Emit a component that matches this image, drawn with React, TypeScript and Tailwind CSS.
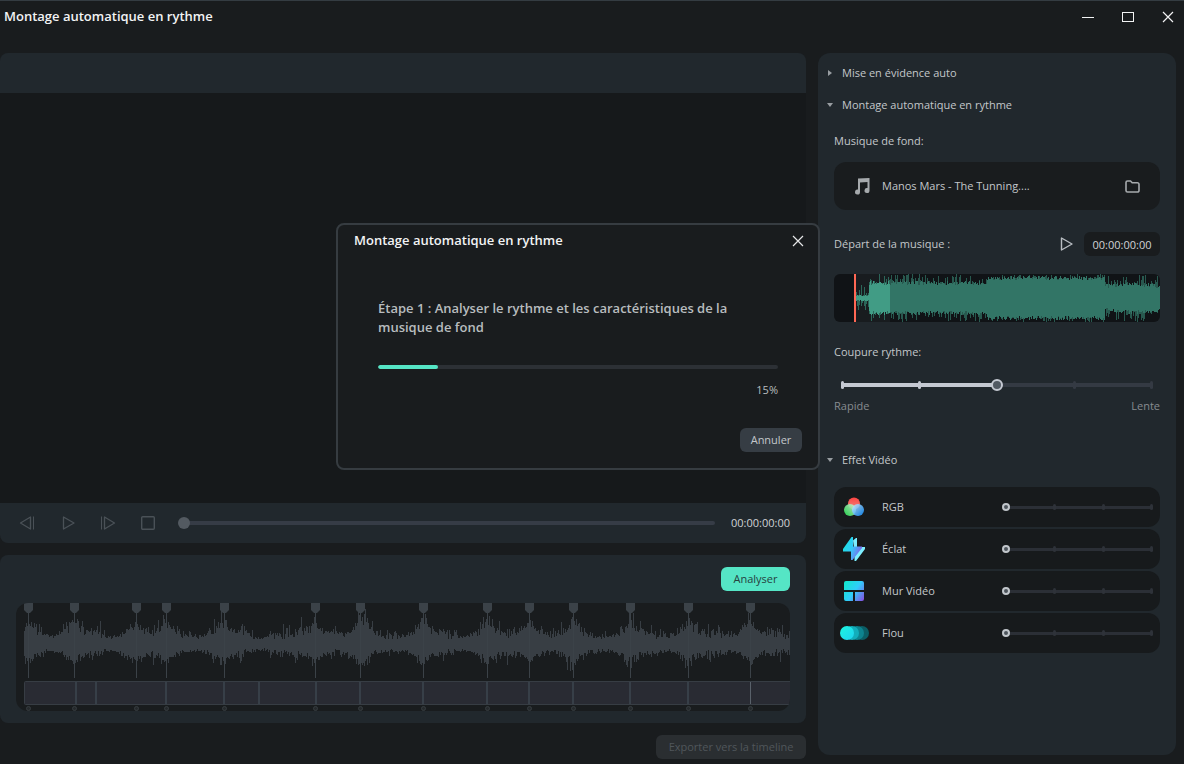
import { useState } from "react";

const MARKERS = [28, 74, 136, 166, 224, 315, 360, 423, 487, 529, 573, 630, 688, 750];
const CUTS = [76, 96, 166, 224, 259, 316, 360, 423, 487, 529, 573, 630, 688];

// small deterministic noise so the waveforms never change between renders
function noise(n: number) {
  const v = Math.sin(n * 127.1 + 311.7) * 43758.5453;
  return v - Math.floor(v);
}

function wavePath(from: number, to: number, mid: number, amp: (x: number) => [number, number]) {
  let d = "";
  for (let x = from; x < to; x++) {
    const [up, down] = amp(x);
    d += `M${x} ${mid - up}h1V${mid + down}h-1z`;
  }
  return d;
}

function beatAmp(x: number): [number, number] {
  const near = Math.min(...MARKERS.map((m) => Math.abs(m - x)));
  const swell = Math.exp(-near / 9);
  const drift = 1 + 0.35 * Math.sin(x / 11) + 0.25 * Math.sin(x / 4.7);
  return [
    Math.round(4 + swell * 11 + drift * (noise(x) * 6 + noise(x + 31) ** 4 * 9) + swell * noise(x + 5) * 8),
    Math.round(4 + swell * 8 + drift * (noise(x + 77) * 5 + noise(x + 431) ** 4 * 6) + swell * noise(x + 6) * 7),
  ];
}

function musicLevel(x: number) {
  if (x < 35) return 2;
  if (x < 153) return 13;
  if (x < 271) return 18;
  return 11 + Math.sin(x / 9);
}

function musicCore(x: number): [number, number] {
  const l = musicLevel(x);
  const k = l < 5 ? 1 : 4;
  return [Math.round(l + noise(x) * k), Math.round(l + noise(x + 50) * k)];
}

function musicFringe(x: number): [number, number] {
  const l = musicLevel(x);
  const k = l < 5 ? 11 : l < 17 ? 12 : 6;
  return [
    Math.min(24, Math.round(l + noise(x + 9) ** 2 * k)),
    Math.min(24, Math.round(l + noise(x + 63) ** 2 * k)),
  ];
}

function MusicWave() {
  return (
    <svg
      viewBox="0 0 326 48"
      preserveAspectRatio="none"
      shapeRendering="crispEdges"
      className="h-12 w-full rounded-md bg-[#101316]"
    >
      <rect x="20" width="36" height="48" fill="#181c1f" />
      <path d={wavePath(22, 56, 24, musicFringe)} fill="#2b6659" />
      <path d={wavePath(22, 56, 24, musicCore)} fill="#419c85" />
      <path d={wavePath(56, 326, 24, musicFringe)} fill="#28594f" />
      <path d={wavePath(56, 326, 24, musicCore)} fill="#327566" />
      <rect x="20" width="2" height="48" fill="#ff6754" />
    </svg>
  );
}

function BeatTimeline() {
  return (
    <svg
      viewBox="16 0 774 108"
      preserveAspectRatio="none"
      className="h-[108px] w-full rounded-xl bg-[#191c1e]"
    >
      <path d={wavePath(24, 790, 41, beatAmp)} fill="#383e44" shapeRendering="crispEdges" />
      <rect x="24.5" y="78.5" width="780" height="23" rx="1" fill="#292b33" stroke="#373d44" />
      <g fill="#373f48" shapeRendering="crispEdges">
        {CUTS.map((x) => (
          <rect key={x} x={x - 1} y="79" width="2" height="22" />
        ))}
        <rect x="750" y="79" width="1" height="22" fill="#59616a" />
      </g>
      {MARKERS.map((x) => (
        <g key={x}>
          <path d={`M${x - 4} 0h9v7l-3 3h-3l-3-3z`} fill="#3b4248" />
          <path d={`M${x} 10h1v65h-1z`} fill="#3b4248" shapeRendering="crispEdges" />
          <circle cx={x + 0.5} cy="105.5" r="2" fill="#25292c" stroke="#373c40" />
        </g>
      ))}
    </svg>
  );
}

function RgbIcon() {
  return (
    <svg width="20" height="20" viewBox="0 0 20 20">
      <defs>
        <linearGradient id="rgb-r" x1="0" y1="0" x2="0" y2="1">
          <stop stopColor="#ff4340" />
          <stop offset="1" stopColor="#e98c88" />
        </linearGradient>
        <linearGradient id="rgb-g" x1="0" y1="1" x2="1" y2="0">
          <stop stopColor="#1fe04b" />
          <stop offset="1" stopColor="#d9efdc" />
        </linearGradient>
        <linearGradient id="rgb-b" x1="1" y1="1" x2="0" y2="0">
          <stop stopColor="#0a8bff" />
          <stop offset="1" stopColor="#c9ecff" />
        </linearGradient>
      </defs>
      <circle cx="10" cy="6.5" r="6" fill="url(#rgb-r)" />
      <circle cx="6" cy="13" r="6" fill="url(#rgb-g)" fillOpacity="0.92" />
      <circle cx="14" cy="13" r="6" fill="url(#rgb-b)" fillOpacity="0.88" />
    </svg>
  );
}

function FlashIcon() {
  return (
    <svg width="24" height="26" viewBox="0 0 24 26">
      <defs>
        <linearGradient id="flash" x1="0" y1="0.2" x2="1" y2="0.7">
          <stop stopColor="#14e6dc" />
          <stop offset="0.5" stopColor="#36c9fb" />
          <stop offset="1" stopColor="#8a55e8" />
        </linearGradient>
      </defs>
      <path d="M11 4.500 14 2h1v9h8v2L14 25h-1.500V15z" fill="#7deeff" />
      <path d="M9.500 1H11v9.500h9v1.500L10.500 24H9V15.500H1V13z" fill="url(#flash)" />
    </svg>
  );
}

function WallIcon() {
  return (
    <svg width="20" height="20" viewBox="0 0 20 20">
      <defs>
        <linearGradient id="wall" gradientUnits="userSpaceOnUse" x1="0" y1="4" x2="20" y2="18">
          <stop stopColor="#14e5d0" />
          <stop offset="0.5" stopColor="#30cdfb" />
          <stop offset="1" stopColor="#8355e4" />
        </linearGradient>
      </defs>
      <path
        d="M2 0h16a2 2 0 0 1 2 2v7H0V2a2 2 0 0 1 2-2zM0 11h9v9H2a2 2 0 0 1-2-2zM11 11h9v7a2 2 0 0 1-2 2h-7z"
        fill="url(#wall)"
      />
    </svg>
  );
}

function BlurIcon() {
  return (
    <svg width="29" height="14" viewBox="0 0 29 14">
      <defs>
        <linearGradient id="blur" x1="0" y1="0" x2="1" y2="1">
          <stop stopColor="#1cf5df" />
          <stop offset="1" stopColor="#1fd3f2" />
        </linearGradient>
      </defs>
      <circle cx="22" cy="7" r="7" fill="#0b5e66" />
      <circle cx="17" cy="7" r="7" fill="#0d838f" />
      <circle cx="12" cy="7" r="7" fill="#12aebb" />
      <circle cx="7" cy="7" r="7" fill="url(#blur)" />
    </svg>
  );
}

function CloseIcon() {
  return (
    <svg width="12" height="12" viewBox="0 0 12 12" fill="none" stroke="currentColor">
      <path d="M1 1l10 10M11 1L1 11" strokeWidth="1.2" />
    </svg>
  );
}

function SectionToggle({ label, open }: { label: string; open: boolean }) {
  return (
    <button type="button" aria-expanded={open} className="flex h-8 items-center gap-2 pl-2 text-left">
      <svg width="8" height="8" viewBox="0 0 8 8" fill="#989da1">
        {open ? <path d="M1 2h6L4 6z" /> : <path d="M2 1v6l4-3z" />}
      </svg>
      {label}
    </button>
  );
}

function CutSlider() {
  const [value, setValue] = useState(2);
  return (
    <div className="grid items-center px-[2px]">
      <div className="col-start-1 row-start-1 mx-[5px] h-1 bg-[#343a43]">
        <div className="h-full bg-[#c5c9d2]" style={{ width: `${value * 25}%` }} />
      </div>
      <div className="col-start-1 row-start-1 mx-[5px] flex justify-between">
        {[0, 1, 2, 3, 4].map((i) => (
          <span
            key={i}
            className={`h-2 w-[3px] rounded-full ${i <= value ? "bg-[#c5c9d2]" : "bg-[#343a43]"}`}
          />
        ))}
      </div>
      <input
        id="cut"
        type="range"
        min={0}
        max={4}
        value={value}
        onChange={(e) => setValue(Number(e.target.value))}
        className="col-start-1 row-start-1 h-4 w-full appearance-none bg-transparent [&::-webkit-slider-thumb]:size-3 [&::-webkit-slider-thumb]:appearance-none [&::-webkit-slider-thumb]:rounded-full [&::-webkit-slider-thumb]:border-2 [&::-webkit-slider-thumb]:border-[#c5c9d2] [&::-webkit-slider-thumb]:bg-[#525a63]"
      />
    </div>
  );
}

const EFFECTS = [
  { id: "rgb", label: "RGB", icon: <RgbIcon /> },
  { id: "flash", label: "Éclat", icon: <FlashIcon /> },
  { id: "wall", label: "Mur Vidéo", icon: <WallIcon /> },
  { id: "blur", label: "Flou", icon: <BlurIcon /> },
];

function EffectRow({ id, label, icon }: { id: string; label: string; icon: React.ReactNode }) {
  return (
    <div className="flex h-10 items-center rounded-xl bg-[#171a1c] pr-1">
      <span className="grid w-10 place-items-center">{icon}</span>
      <label htmlFor={id} className="flex-1 pl-2">
        {label}
      </label>
      <div className="grid w-[154px] items-center">
        <div className="col-start-1 row-start-1 mx-1 h-[3px] rounded-full bg-[#2b2f36]" />
        <div className="col-start-1 row-start-1 mx-[3px] flex justify-between">
          {[0, 1, 2, 3].map((i) => (
            <span key={i} className="h-[6px] w-[3px] rounded-full bg-[#2e3239]" />
          ))}
        </div>
        <input
          id={id}
          type="range"
          min={0}
          max={3}
          defaultValue={0}
          className="col-start-1 row-start-1 h-4 w-full appearance-none bg-transparent [&::-webkit-slider-thumb]:size-2 [&::-webkit-slider-thumb]:appearance-none [&::-webkit-slider-thumb]:rounded-full [&::-webkit-slider-thumb]:border-2 [&::-webkit-slider-thumb]:border-[#c1c6cb] [&::-webkit-slider-thumb]:bg-[#4d545b]"
        />
      </div>
    </div>
  );
}

function SidePanel() {
  return (
    <aside className="flex w-[358px] shrink-0 flex-col rounded-xl bg-[#21282d] pt-1 text-[#c3c7ca]">
      <SectionToggle label="Mise en évidence auto" open={false} />
      <SectionToggle label="Montage automatique en rythme" open />
      <div className="flex flex-col px-4">
        <h3 className="mt-3 leading-4">Musique de fond:</h3>
        <div className="mt-[13px] flex h-12 items-center rounded-xl bg-[#191c1e] px-5">
          <svg width="16" height="18" viewBox="0 0 16 18" fill="#a6aaad">
            <path d="M4 1.500 15.500 1V13.500a2.500 2.500 0 1 1-2-2.400V5L6 5.500v9.500a2.500 2.500 0 1 1-2-2.400z" />
          </svg>
          <span className="flex-1 pl-3">Manos Mars - The Tunning....</span>
          <button type="button" aria-label="Parcourir">
            <svg width="15" height="13" viewBox="0 0 15 13" fill="none" stroke="#a6aaad" strokeWidth="1.6">
              <path d="M1 2.500a1.500 1.500 0 0 1 1.500-1.500h3l1.700 1.800h5.300A1.500 1.500 0 0 1 14 4.300v6.200a1.500 1.500 0 0 1-1.500 1.500h-10A1.500 1.500 0 0 1 1 10.500z" />
            </svg>
          </button>
        </div>
        <div className="mt-[22px] flex h-6 items-center">
          <label htmlFor="start" className="flex-1">
            Départ de la musique :
          </label>
          <button type="button" aria-label="Écouter" className="mr-[11px]">
            <svg width="13" height="14" viewBox="0 0 13 14" fill="none" stroke="#b9bec3" strokeWidth="1.4">
              <path d="M1.500 1v12L12 7z" strokeLinejoin="round" />
            </svg>
          </button>
          <input
            id="start"
            defaultValue="00:00:00:00"
            className="h-6 w-[76px] rounded-md bg-[#191c1e] text-center text-[#d0d3d6]"
          />
        </div>
        <div className="mt-[18px]">
          <MusicWave />
        </div>
        <label htmlFor="cut" className="mt-[22px] leading-4">
          Coupure rythme:
        </label>
        <div className="mt-[17px]">
          <CutSlider />
        </div>
        <div className="mt-[5px] flex justify-between leading-4 text-[#878c90]">
          <span>Rapide</span>
          <span>Lente</span>
        </div>
      </div>
      <div className="mt-[30px] flex flex-col">
        <SectionToggle label="Effet Vidéo" open />
      </div>
      <div className="mt-[11px] flex flex-col gap-[2px] px-4">
        {EFFECTS.map((e) => (
          <EffectRow key={e.id} {...e} />
        ))}
      </div>
    </aside>
  );
}

function PlayerControls() {
  return (
    <div className="flex h-10 items-center bg-[#21282d] pr-4 pl-[19px]">
      <div className="flex items-center gap-[25px] text-[#4a5157]">
        <button type="button" aria-label="Image précédente">
          <svg width="16" height="14" viewBox="0 0 16 14" fill="none" stroke="currentColor" strokeWidth="1.3">
            <path d="M11.500 1v12L1.500 7z" strokeLinejoin="round" />
            <path d="M14.500 0.500v13" strokeWidth="1" />
          </svg>
        </button>
        <button type="button" aria-label="Lecture" className="pl-[2px]">
          <svg width="13" height="14" viewBox="0 0 13 14" fill="none" stroke="currentColor" strokeWidth="1.3">
            <path d="M1.500 1v12L12 7z" strokeLinejoin="round" />
          </svg>
        </button>
        <button type="button" aria-label="Image suivante">
          <svg width="16" height="14" viewBox="0 0 16 14" fill="none" stroke="currentColor" strokeWidth="1.3">
            <path d="M4.500 1v12L14.500 7z" strokeLinejoin="round" />
            <path d="M1.500 0.500v13" strokeWidth="1" />
          </svg>
        </button>
        <button type="button" aria-label="Arrêt">
          <svg width="14" height="14" viewBox="0 0 14 14" fill="none" stroke="currentColor" strokeWidth="1.4">
            <rect x="0.700" y="0.700" width="12.600" height="12.600" rx="1" />
          </svg>
        </button>
      </div>
      <div className="ml-[23px] grid flex-1 items-center">
        <div className="col-start-1 row-start-1 ml-1 h-1 rounded-full bg-[#363c46]" />
        <input
          type="range"
          aria-label="Position"
          defaultValue={0}
          className="col-start-1 row-start-1 h-4 w-full appearance-none bg-transparent [&::-webkit-slider-thumb]:size-3 [&::-webkit-slider-thumb]:appearance-none [&::-webkit-slider-thumb]:rounded-full [&::-webkit-slider-thumb]:bg-[#535a61]"
        />
      </div>
      <time className="ml-4 text-[#d0d3d6]">00:00:00:00</time>
    </div>
  );
}

function ProgressDialog({ percent }: { percent: number }) {
  return (
    <div className="fixed inset-0 flex items-center justify-center pr-7 pb-[71px]">
      <div
        role="dialog"
        aria-labelledby="dialog-title"
        className="flex w-[484px] flex-col rounded-lg border-2 border-[#363c41] bg-[#191c1e] px-4 pt-[6px] pb-4"
      >
        <div className="-mr-[2px] flex h-5 items-center justify-between">
          <h2 id="dialog-title" className="text-[13px] font-semibold text-[#f2f3f4]">
            Montage automatique en rythme
          </h2>
          <button type="button" aria-label="Fermer" className="text-[#e6e7e8]">
            <CloseIcon />
          </button>
        </div>
        <div className="mt-12 flex flex-col px-6">
          <p className="text-[13px] leading-[19px] font-semibold text-[#b8bcbf]">
            Étape 1 : Analyser le rythme et les caractéristiques de la musique de fond
          </p>
          <div
            role="progressbar"
            aria-label="Analyse"
            aria-valuenow={percent}
            className="mt-7 h-1 overflow-hidden rounded-full bg-[#2c3035]"
          >
            <div className="h-full rounded-full bg-[#55e5c5]" style={{ width: `${percent}%` }} />
          </div>
          <span className="mt-[13px] self-end leading-4 text-[#b8bcbf]">{percent}%</span>
        </div>
        <button
          type="button"
          className="mt-[30px] h-6 w-[62px] self-end rounded-md bg-[#363d44] text-[#c3c7ca]"
        >
          Annuler
        </button>
      </div>
    </div>
  );
}

export default function App() {
  return (
    <div className="flex min-h-screen flex-col border-t border-[#343c42] bg-[#191c1e] font-['Open_Sans',sans-serif] text-[11px]">
      <header className="mb-5 flex h-8 items-center justify-between pr-[10px] pl-1 text-[#f2f3f4]">
        <h1 className="text-[13px] font-semibold">Montage automatique en rythme</h1>
        <div className="flex items-center gap-7">
          <button type="button" aria-label="Réduire">
            <svg width="12" height="12" viewBox="0 0 12 12">
              <path d="M0 6h12v1H0z" fill="currentColor" />
            </svg>
          </button>
          <button type="button" aria-label="Agrandir">
            <svg width="12" height="12" viewBox="0 0 12 12">
              <rect x="0.500" y="1.500" width="11" height="9" fill="none" stroke="currentColor" />
            </svg>
          </button>
          <button type="button" aria-label="Fermer la fenêtre">
            <CloseIcon />
          </button>
        </div>
      </header>
      <div className="flex flex-1 gap-3 pr-2">
        <main className="flex min-w-0 flex-1 flex-col pb-[5px]">
          <section className="flex flex-1 flex-col overflow-hidden rounded-lg">
            <div className="h-10 bg-[#21282d]" />
            <div className="flex-1 bg-[#16191b]" />
            <PlayerControls />
          </section>
          <section className="mt-3 flex flex-col rounded-lg bg-[#21282d] px-4 py-3">
            <button
              type="button"
              className="h-6 w-[69px] self-end rounded-md bg-[#55e5c5] text-[#26423f]"
            >
              Analyser
            </button>
            <div className="mt-3">
              <BeatTimeline />
            </div>
          </section>
          <button
            type="button"
            disabled
            className="mt-3 h-6 w-[150px] self-end rounded-md bg-[#2a2e31] text-[#50565b]"
          >
            Exporter vers la timeline
          </button>
        </main>
        <div className="flex pb-[9px]">
          <SidePanel />
        </div>
      </div>
      <ProgressDialog percent={15} />
    </div>
  );
}
